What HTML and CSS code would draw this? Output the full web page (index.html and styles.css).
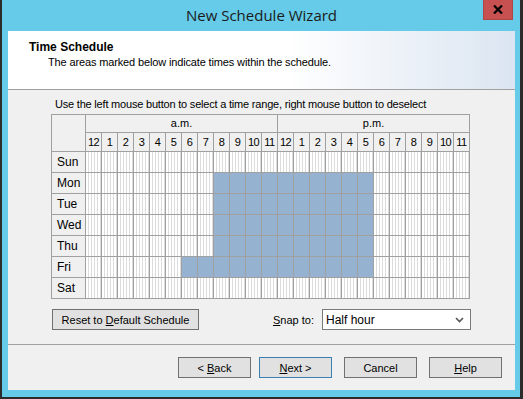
FILE: index.html
```html
<!DOCTYPE html>
<html>
<head>
  <title>New Schedule Wizard</title>
  <link rel="stylesheet" href="styles.css">
</head>
<body>
  <div class="window">
    <div class="titlebar">
      <span class="title">New Schedule Wizard</span>
      <div class="close">
        <svg width="10" height="9" viewBox="0 0 10 9">
          <path d="M1 0.5 L9 8.5 M9 0.5 L1 8.5" stroke="#000" stroke-width="2.2" fill="none"/>
        </svg>
      </div>
    </div>

    <div class="client">
      <div class="header">
        <div class="head-title">Time Schedule</div>
        <div class="head-sub">The areas marked below indicate times within the schedule.</div>
      </div>

      <div class="main">
        <div class="hint">Use the left mouse button to select a time range, right mouse button to deselect</div>
        <div class="grid" id="grid">
          <div class="corner"></div>
          <div class="half">a.m.</div>
          <div class="half">p.m.</div>
        </div>

        <div class="controls">
          <button class="btn reset">Reset to <u>D</u>efault Schedule</button>
          <div class="snap">
            <span class="snap-label"><u>S</u>nap to:</span>
            <div class="select">
              <span>Half hour</span>
              <svg width="9" height="6" viewBox="0 0 9 6">
                <path d="M1 1 L4.5 4.5 L8 1" stroke="#555" stroke-width="1.6" fill="none"/>
              </svg>
            </div>
          </div>
        </div>
      </div>

      <div class="footer">
        <button class="btn">&lt; <u>B</u>ack</button>
        <button class="btn next"><u>N</u>ext &gt;</button>
        <button class="btn cancel">Cancel</button>
        <button class="btn"><u>H</u>elp</button>
      </div>
    </div>
  </div>

  <script>
    var grid = document.getElementById('grid');
    var days = ['Sun', 'Mon', 'Tue', 'Wed', 'Thu', 'Fri', 'Sat'];

    // hour labels
    for (var h = 0; h < 24; h++) {
      var label = document.createElement('div');
      label.className = 'hour';
      label.textContent = (h % 12) || 12;
      grid.appendChild(label);
    }

    // selected ranges: [first hour, last hour]
    var ranges = { Mon: [8, 17], Tue: [8, 17], Wed: [8, 17], Thu: [8, 17], Fri: [6, 17] };

    days.forEach(function(day) {
      var name = document.createElement('div');
      name.className = 'day';
      name.textContent = day;
      grid.appendChild(name);

      for (var h = 0; h < 24; h++) {
        var cell = document.createElement('div');
        cell.className = 'cell';
        var r = ranges[day];
        if (r && h >= r[0] && h <= r[1]) {
          cell.className += ' on';
        }
        grid.appendChild(cell);
      }
    });
  </script>
</body>
</html>
```

FILE: styles.css
```css
body {
  margin: 0;
  padding: 0 3px 2px 2px;
  background-color: #2b2b2b;
  font-family: "Liberation Sans", Arial, sans-serif;
  font-size: 11px;
  color: #000;
}

.window {
  width: 518px;
  height: 397px;
  box-sizing: border-box;
  padding: 0 5px 7px 6px;
  background-color: #65cbe8;
  display: flex;
  flex-direction: column;
}

.titlebar {
  position: relative;
  height: 31px;
  display: flex;
  justify-content: center;
  align-items: center;
  flex-shrink: 0;
}

.title {
  font-family: "Open Sans", "Noto Sans", sans-serif;
  font-size: 15px;
  color: #1a1a1a;
  margin-top: -1px;
}

.close {
  position: absolute;
  top: 0;
  right: 2px;
  width: 30px;
  height: 20px;
  box-sizing: border-box;
  background-color: #c75050;
  border: 1px solid #b04545;
  border-top: none;
  display: flex;
  justify-content: center;
  align-items: center;
}

.client {
  flex: 1;
  background-color: #f0f0f0;
  display: flex;
  flex-direction: column;
}

.header {
  height: 59px;
  box-sizing: border-box;
  padding: 9px 0 0 21px;
  border-bottom: 1px solid #a0a0a0;
  background: linear-gradient(to right, #fff 55%, #dbe5f1);
}

.head-title {
  font-weight: bold;
  font-size: 12px;
  line-height: 15px;
}

.head-sub {
  padding-left: 19px;
  line-height: 15px;
  letter-spacing: -0.14px;
}

.main {
  height: 254px;
  box-sizing: border-box;
  padding: 8px 0 0 43px;
}

.hint {
  line-height: 13px;
  margin: 0 0 3px 4px;
  letter-spacing: -0.2px;
}

.grid {
  display: grid;
  grid-template-columns: 33px repeat(24, 15px);
  grid-template-rows: 17px 18px repeat(7, 20px);
  gap: 1px;
  padding: 1px;
  width: max-content;
  background-color: #a0a0a0;
}

.corner {
  grid-row: span 2;
  background-color: #f0f0f0;
}

.half {
  grid-column: span 12;
  background-color: #f0f0f0;
  text-align: center;
  line-height: 17px;
}

.hour {
  background-color: #f0f0f0;
  text-align: center;
  line-height: 18px;
  letter-spacing: -0.5px;
}

.day {
  background-color: #f0f0f0;
  padding-left: 5px;
  line-height: 20px;
  font-size: 12px;
}

.cell {
  background-color: #fff;
  background-image: repeating-linear-gradient(to right, #fff 0, #fff 2px, #dcdcdc 2px, #dcdcdc 3px);
}

.cell.on {
  background: #95b3d1;
}

.controls {
  display: flex;
  align-items: center;
  width: 419px;
  margin: 10px 0 0 1px;
}

.btn {
  height: 21px;
  box-sizing: border-box;
  border: 1px solid #707070;
  background-color: #e1e1e1;
  font-family: inherit;
  font-size: 11px;
  color: #000;
  padding: 0;
}

.reset {
  width: 147px;
}

.snap {
  margin-left: auto;
  display: flex;
  align-items: center;
}

.snap-label {
  margin-right: 8px;
}

.select {
  width: 149px;
  height: 21px;
  box-sizing: border-box;
  border: 1px solid #7a7a7a;
  background-color: #fff;
  display: flex;
  justify-content: space-between;
  align-items: center;
  padding: 0 6px 0 3px;
  font-size: 12px;
}

.footer {
  flex: 1;
  border-top: 1px solid #a0a0a0;
  display: flex;
  justify-content: flex-end;
  align-items: flex-start;
  padding: 12px 13px 0 0;
}

.footer .btn {
  width: 73px;
  margin-left: 12px;
}

.footer .next {
  margin-left: 8px;
  border-color: #3c7fb1;
}
```
